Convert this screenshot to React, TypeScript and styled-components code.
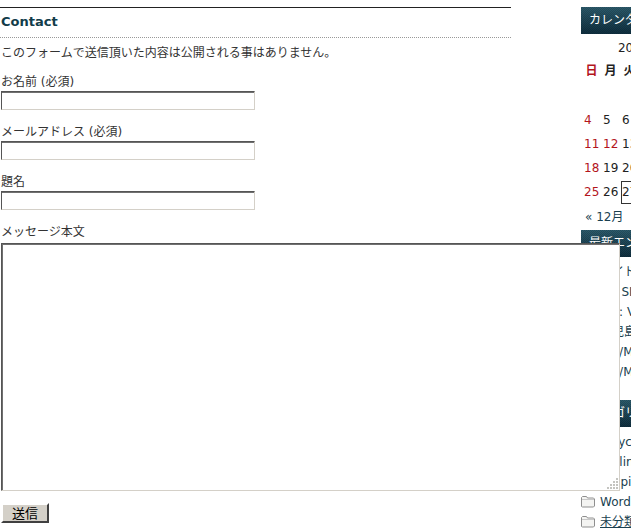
import styled, { createGlobalStyle } from 'styled-components';

const GlobalStyle = createGlobalStyle`
  html, body { margin: 0; padding: 0; background: #fff; overflow: hidden; }
  body { font: 12px/20px "DejaVu Sans", "Noto Sans CJK JP", sans-serif; color: #333; }
`;

const Page = styled.div`
  display: flex;
  width: 631px;
  height: 529px;
  overflow: hidden;
`;

const Main = styled.main`
  flex: none;
  width: 511px;
  margin-right: 70px;
  padding-top: 7px;
`;

const Title = styled.h2`
  margin: 0 0 5px;
  padding: 4px 0 6px 1px;
  height: 19px;
  border-top: 1px solid #222;
  border-bottom: 1px dotted #999;
  font-size: 13px;
  line-height: 19px;
  font-weight: bold;
  color: #123c4a;
`;

const Form = styled.form`
  padding-left: 1px;
`;

const Note = styled.p`
  margin: 0 0 9px;
  line-height: 20px;
`;

const Field = styled.div`
  margin-bottom: 12px;
`;

const Label = styled.label`
  display: block;
  line-height: 20px;
  height: 20px;
`;

const TextInput = styled.input`
  display: block;
  box-sizing: border-box;
  width: 254px;
  height: 19px;
  margin: -1px 0 0;
  padding: 0;
  background: #fff;
  border: 1px solid;
  border-color: #555 #d4d0c8 #d4d0c8 #555;
  box-shadow: inset 0 1px 0 #707070;
  outline: 0;
`;

const MessageWrap = styled.div`
  position: relative;
  z-index: 1;
  width: 619px;
  height: 248px;
  margin-top: 1px;
`;

const Message = styled.textarea`
  display: block;
  box-sizing: border-box;
  width: 100%;
  height: 100%;
  margin: 0;
  padding: 0;
  background: #fff;
  border: 1px solid;
  border-color: #555 #d4d0c8 #d4d0c8 #555;
  box-shadow: inset 0 1px 0 #707070, inset 1px 0 0 #707070;
  outline: 0;
  resize: none;
`;

const Grip = styled.svg`
  position: absolute;
  right: 2px;
  bottom: 2px;
  width: 11px;
  height: 11px;
`;

const Send = styled.button`
  display: block;
  box-sizing: border-box;
  width: 48px;
  height: 20px;
  margin: 12px 0 0;
  padding: 0;
  background: #d4d0c8;
  border: 2px solid;
  border-color: #fff #404040 #404040 #fff;
  font: 13px/14px "Noto Sans CJK JP", sans-serif;
  color: #000;
`;

const Side = styled.aside`
  flex: none;
  width: 190px;
  padding-top: 7px;
`;

const SideHead = styled.h3`
  margin: 0;
  height: 27px;
  padding-left: 8px;
  background:
    repeating-conic-gradient(rgba(0, 0, 0, 0.14) 0 25%, transparent 0 50%) 0 0 / 2px 2px,
    linear-gradient(#2c5b6c, #0f2f3f);
  color: #fff;
  font-size: 12px;
  line-height: 27px;
  font-weight: normal;
  white-space: nowrap;
`;

const Caption = styled.div`
  width: 136px;
  height: 23px;
  margin-top: 2px;
  text-align: center;
  line-height: 24px;
  color: #222;
`;

const Calendar = styled.div`
  display: grid;
  grid-template-columns: repeat(7, 19px);
  grid-auto-rows: 24.25px;
  padding-left: 1px;
  line-height: 24px;
`;

const WeekDay = styled.div<{ $red?: boolean }>`
  color: ${p => (p.$red ? '#b3151c' : '#222')};
  font-weight: bold;
  text-align: center;
`;

const Day = styled.div<{ $red?: boolean; $today?: boolean }>`
  padding-left: 2px;
  color: ${p => (p.$red ? '#b3151c' : '#222')};
  ${p => p.$today && 'outline: 1px solid #333; outline-offset: -2px;'}
  white-space: nowrap;
`;

const PrevMonth = styled.a`
  display: block;
  height: 25.5px;
  padding-left: 4px;
  line-height: 24px;
  color: #1a3f4f;
`;

const EntryList = styled.ul`
  margin: 0 0 18px;
  padding: 5px 0 0;
  list-style: none;
`;

const Entry = styled.li`
  height: 20px;
  padding-left: 19px;
  line-height: 20px;
  white-space: nowrap;
  display: flex;
  align-items: center;
  gap: 5px;
  color: #1a3f4f;
`;

const EntryText = styled.span<{ $link?: boolean }>`
  text-decoration: ${p => (p.$link ? 'underline' : 'none')};
`;

const FolderIcon = styled.svg`
  flex: none;
  width: 14px;
  height: 12px;
  margin-left: -19px;
`;

const Folder = () => (
  <FolderIcon viewBox="0 0 14 12">
    <path d="M.5 10.5V1.5l1-1h4l1 1.5h6l1 1v7l-1 1h-11z" fill="#f4f4f2" stroke="#8f8f8f" />
    <path d="M1 3.5h12" stroke="#c8c8c8" />
  </FolderIcon>
);

const WEEK = ['日', '月', '火', '水', '木', '金', '土'];
const ROWS = [
  ['', '', '1', '2', '3', '4', '5'],
  ['4', '5', '6', '7', '8', '9', '10'],
  ['11', '12', '13', '14', '15', '16', '17'],
  ['18', '19', '20', '21', '22', '23', '24'],
  ['25', '26', '27', '28', '29', '30', '31'],
];

const ENTRIES = ['サイドバー', 'MT SITE', 'WP: Version', '鹿児島', 'WP/MT', 'WP/MT'];
const CATEGORIES = ['Bicycle', 'TV link', 'Go pile'];
const GRIP_DOTS = [[9, 0], [9, 3], [6, 3], [9, 6], [6, 6], [3, 6], [9, 9], [6, 9], [3, 9], [0, 9]];

export default function App() {
  return (
    <Page>
      <GlobalStyle />
      <Main>
        <Title>Contact</Title>
        <Form>
          <Note>このフォームで送信頂いた内容は公開される事はありません。</Note>
          <Field>
            <Label>お名前 (必須)</Label>
            <TextInput />
          </Field>
          <Field>
            <Label>メールアドレス (必須)</Label>
            <TextInput />
          </Field>
          <Field>
            <Label>題名</Label>
            <TextInput />
          </Field>
          <Label>メッセージ本文</Label>
          <MessageWrap>
            <Message />
            <Grip viewBox="0 0 11 11">
              {GRIP_DOTS.map(([x, y]) => (
                <rect key={`${x}-${y}`} x={x} y={y} width="2" height="2" fill="#c4c4c0" />
              ))}
            </Grip>
          </MessageWrap>
          <Send type="button">送信</Send>
        </Form>
      </Main>
      <Side>
        <SideHead>カレンダー</SideHead>
        <Caption>2013年1月</Caption>
        <Calendar>
          {WEEK.map((d, i) => (
            <WeekDay key={d} $red={i === 0}>{d}</WeekDay>
          ))}
          {ROWS[0].map((d, i) => <Day key={i} />)}
          {ROWS.slice(1).map(r =>
            r.map((d, i) => (
              <Day key={d} $red={i === 0 || d === '12'} $today={d === '27'}>{d}</Day>
            )),
          )}
        </Calendar>
        <PrevMonth>« 12月</PrevMonth>
        <SideHead>最新エントリー</SideHead>
        <EntryList>
          {ENTRIES.map((e, i) => (
            <Entry key={i}><EntryText>{e}</EntryText></Entry>
          ))}
        </EntryList>
        <SideHead>カテゴリー</SideHead>
        <EntryList>
          {CATEGORIES.map(e => (
            <Entry key={e}><Folder /><EntryText>{e}</EntryText></Entry>
          ))}
          <Entry><Folder /><EntryText>WordPress</EntryText></Entry>
          <Entry><Folder /><EntryText $link>未分類</EntryText></Entry>
        </EntryList>
      </Side>
    </Page>
  );
}
